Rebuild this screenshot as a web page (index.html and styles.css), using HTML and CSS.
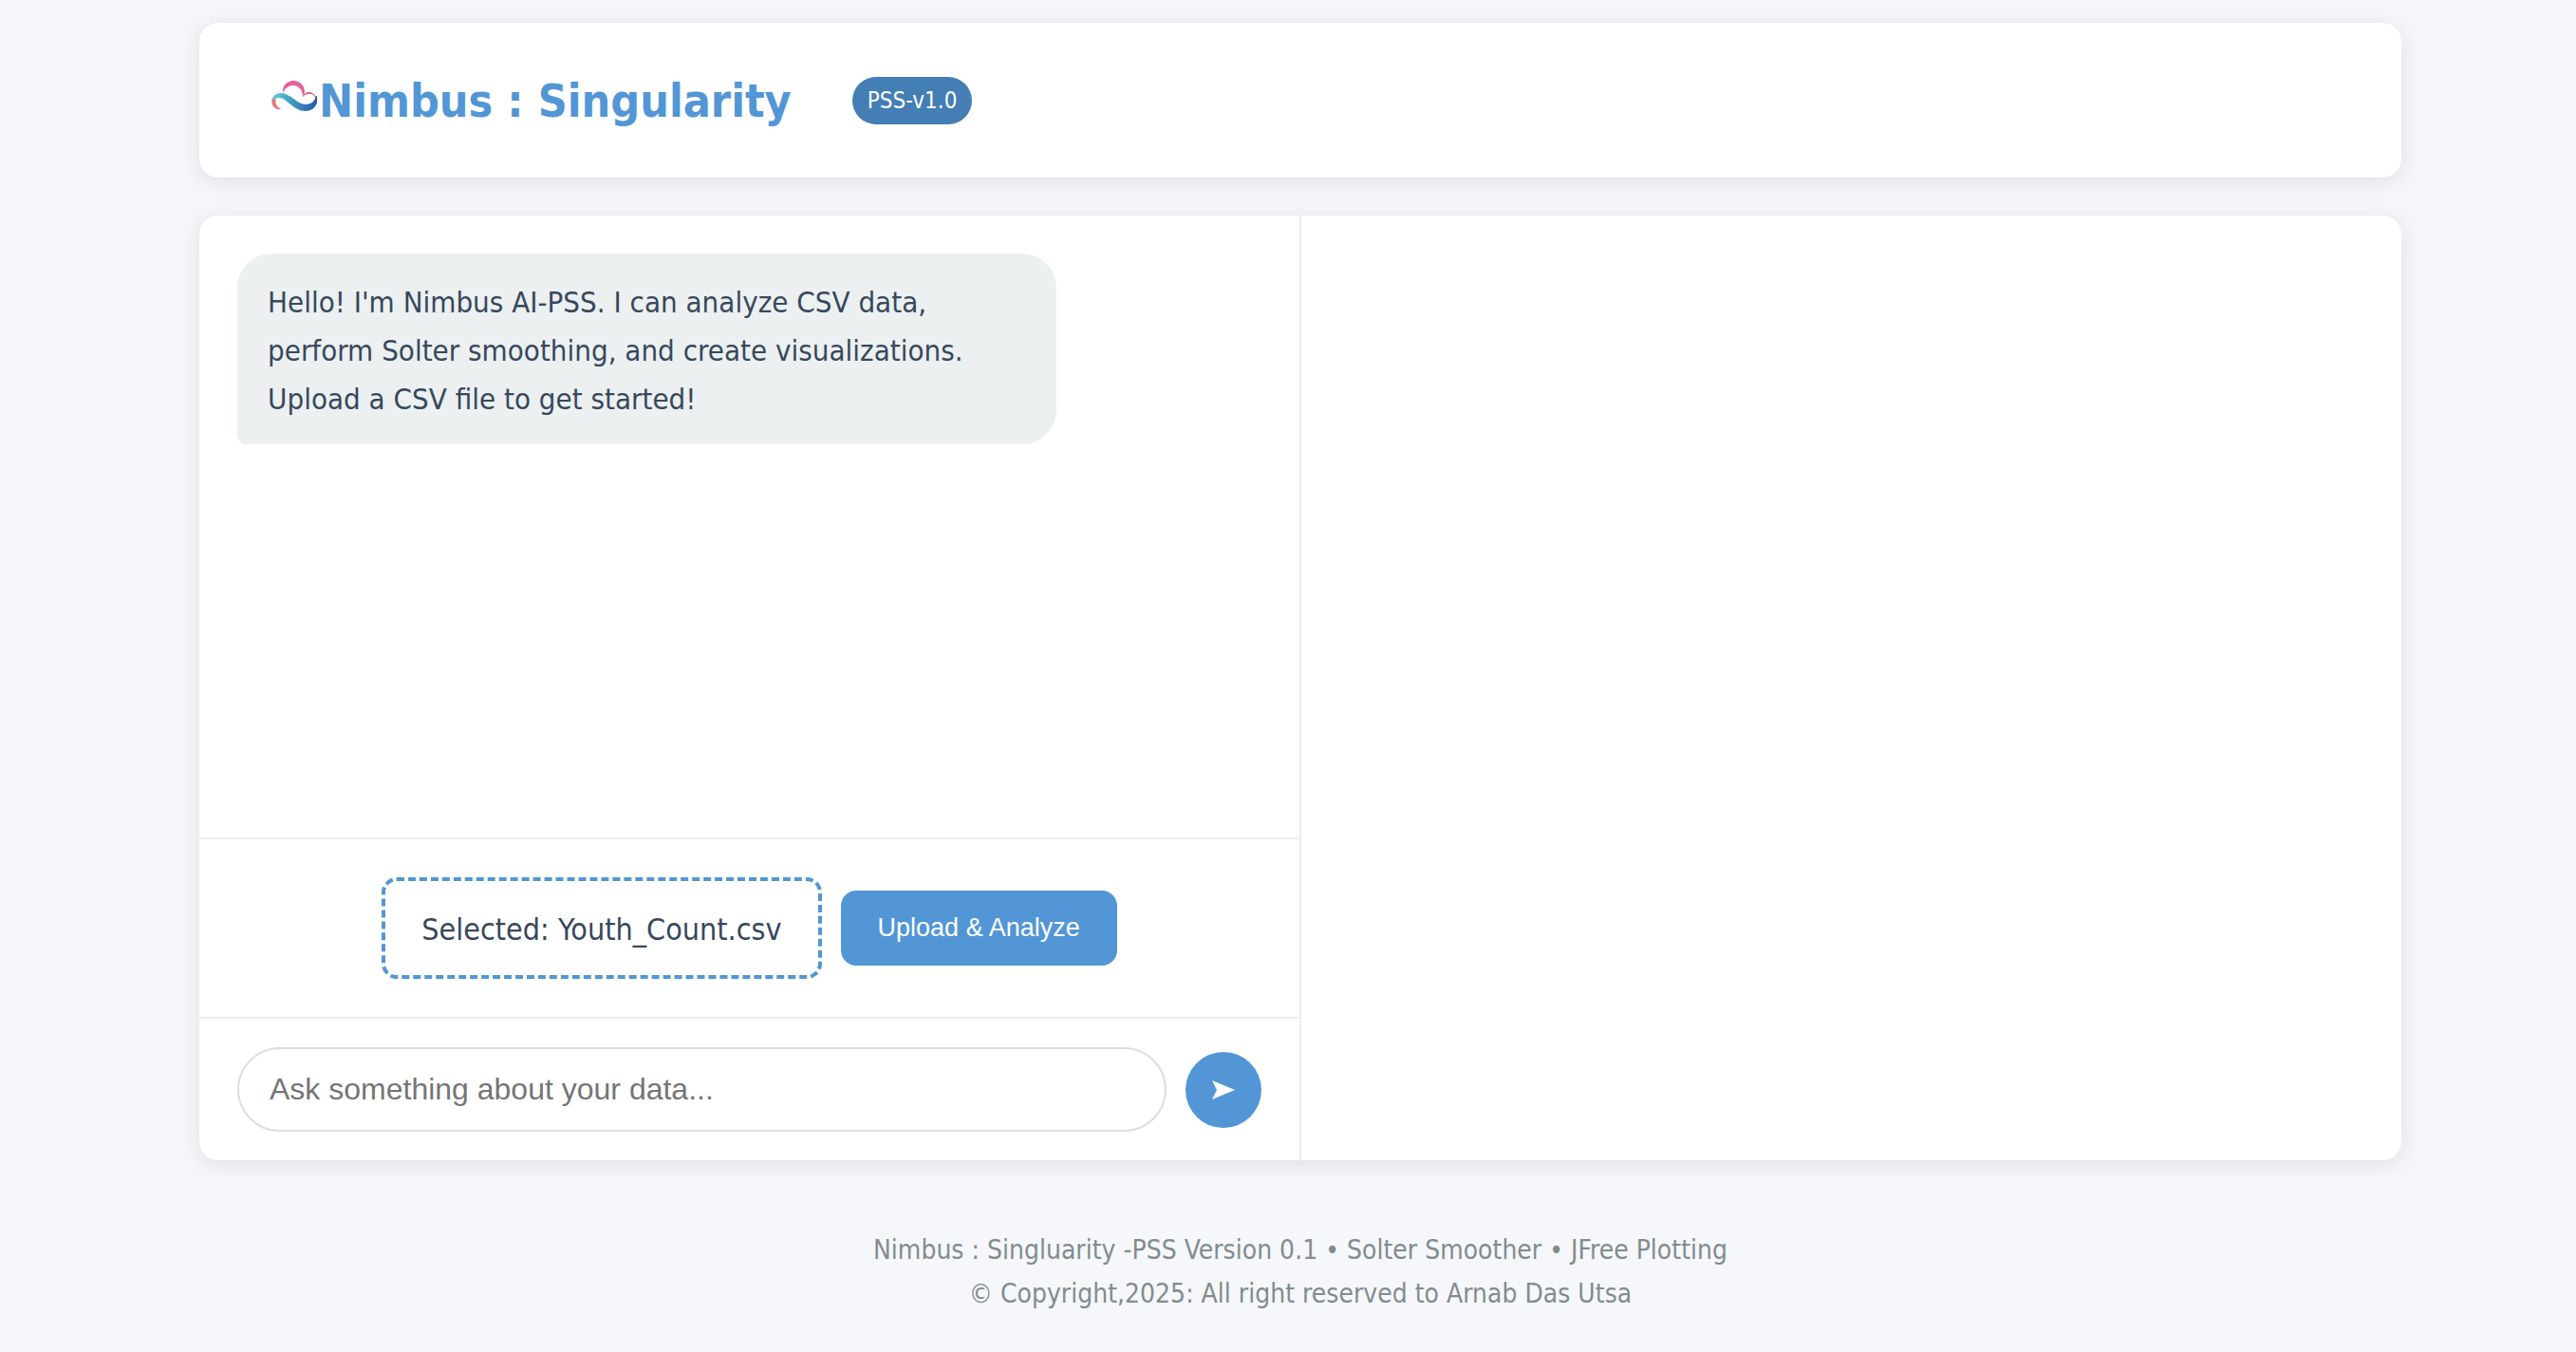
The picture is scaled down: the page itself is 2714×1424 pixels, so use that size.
FILE: index.html
```html
<!DOCTYPE html>
<html lang="en">
<head>
<meta charset="utf-8">
<meta name="viewport" content="width=device-width, initial-scale=1">
<title>Nimbus : Singularity</title>
<link rel="stylesheet" href="styles.css">
</head>
<body>
<header class="header">
  <div class="brand">
    <svg class="logo" viewBox="0 0 48 32" aria-hidden="true">
      <defs>
        <linearGradient id="wave" x1="0" x2="1"><stop offset="0" stop-color="#5fd3de"/><stop offset=".5" stop-color="#3f93c0"/><stop offset="1" stop-color="#2557ac"/></linearGradient>
        <linearGradient id="side" x1="0" x2="1"><stop offset="0" stop-color="#ea5f9b"/><stop offset="1" stop-color="#e8747c"/></linearGradient>
      </defs>
      <path fill="#e85f99" d="M12 13C11 5 17 0 23 0c7 0 12 5 12 12l-2 5C33 10 29 5 23 5c-5 0-9 3-11 8z"/>
      <path fill="url(#side)" d="M33 16c2-3 5-5 8-4 4 1 7 5 7 10l-2 1c1-5-1-9-5-9-3 0-5 0-8 3z"/>
      <path fill="#e8747c" d="M1 18c-2 6 1 12 7 12l3-1c-5 0-8-5-6-11z"/>
      <path fill="url(#wave)" d="M0 22C1 16 5 13 10 13c10 0 17 12 26 12 6 0 10-4 11-9l1 0c2 8-3 16-12 16C23 32 16 18 8 18c-4 0-6 1-8 4z"/>
    </svg>
    <h1 class="title">Nimbus : Singularity</h1>
  </div>
  <span class="version">PSS-v1.0</span>
</header>
<main class="panel">
  <section class="chat">
    <div class="messages">
      <p class="message">Hello! I'm Nimbus AI-PSS. I can analyze CSV data, perform Solter smoothing, and create visualizations. Upload a CSV file to get started!</p>
    </div>
    <form class="upload">
      <label class="file">Selected: Youth_Count.csv<input class="file-input" type="file" accept=".csv"></label>
      <button class="upload-button" type="button">Upload &amp; Analyze</button>
    </form>
    <form class="ask">
      <input class="question" type="text" aria-label="Question" placeholder="Ask something about your data...">
      <button class="send" type="button" aria-label="Send">
        <svg class="send-icon" viewBox="0 0 24 20" aria-hidden="true"><path fill="currentColor" d="M0 0l24 10L0 20l5-10z"/></svg>
      </button>
    </form>
  </section>
  <section class="results" aria-label="Visualizations"></section>
</main>
<footer class="footer">
  <p class="footer-line">Nimbus : Singluarity -PSS Version 0.1 • Solter Smoother • JFree Plotting</p>
  <p class="footer-line">© Copyright,2025: All right reserved to Arnab Das Utsa</p>
</footer>
</body>
</html>
```

FILE: styles.css
```css
* { box-sizing: border-box; margin: 0; padding: 0; }

body {
  display: flex;
  flex-direction: column;
  min-height: 100vh;
  padding: 24px 184px 0 210px;
  background: #f5f7fb;
  color: #38485c;
  font-family: Tahoma, "DejaVu Sans Condensed", sans-serif;
  font-size: 32px;
  line-height: 51px;
}

.header {
  display: flex;
  align-items: center;
  gap: 64px;
  min-height: 163px;
  padding: 40px 76px;
  margin-bottom: 40px;
  background: #fff;
  border-radius: 20px;
  box-shadow: 0 4px 24px rgba(0, 0, 0, 0.1);
}
.brand { display: flex; align-items: center; gap: 2px; }
.logo { width: 48px; height: 32px; margin-bottom: 10px; }
.title { color: #5296d5; font-size: 48px; line-height: 76px; }
.version {
  padding: 6px 16px;
  border-radius: 25px;
  background: #437eb5;
  color: #fff;
  font-size: 24px;
  line-height: 38px;
}

.panel {
  display: flex;
  flex: 1;
  background: #fff;
  border-radius: 20px;
  box-shadow: 0 4px 24px rgba(0, 0, 0, 0.1);
}
.chat { display: flex; flex: 1; flex-direction: column; border-right: 2px solid #eee; }
.results { flex: 1; }
.messages { flex: 1; padding: 40px; }
.message {
  max-width: 80%;
  padding: 26px 32px 22px;
  border-radius: 36px 36px 36px 10px;
  background: #ecf0f1;
  font-size: 31px;
}

.upload {
  display: flex;
  align-items: center;
  justify-content: center;
  gap: 20px;
  padding: 40px;
  border-top: 2px solid #eee;
}
.file { padding: 26px 38px 22px; border: 4px dashed #5296d5; border-radius: 16px; }
.file-input { display: none; }
.upload-button {
  padding: 24px 39px;
  border: 0;
  border-radius: 16px;
  background: #5296d5;
  color: #fff;
  font: 27px/31px "Liberation Sans", Arial, sans-serif;
}

.ask {
  display: flex;
  align-items: center;
  gap: 20px;
  padding: 30px 40px;
  border-top: 2px solid #eee;
}
.question {
  flex: 1;
  min-width: 0;
  height: 89px;
  padding: 0 32px;
  border: 2px solid #ddd;
  border-radius: 50px;
  font: 32px "Liberation Sans", Arial, sans-serif;
}
.question::placeholder { color: #757575; }
.send {
  display: grid;
  place-items: center;
  width: 80px;
  height: 80px;
  border: 0;
  border-radius: 50%;
  background: #5296d5;
  color: #fff;
}
.send-icon { width: 24px; height: 20px; }

.footer {
  padding: 72px 0 38px;
  color: #828c8d;
  font-size: 28px;
  line-height: 46px;
  text-align: center;
}
```
